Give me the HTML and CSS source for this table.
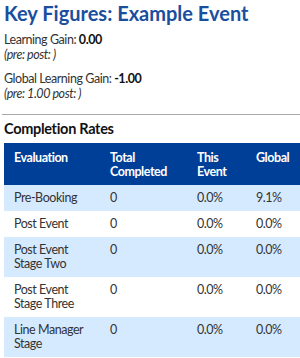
FILE: index.html
```html
<!DOCTYPE html>
<html>
<head>
<meta charset="utf-8">
<link rel="stylesheet" href="styles.css">
</head>
<body>
<div class="page">
  <h1 class="title">Key Figures: Example Event</h1>
  <div class="stat">
    <div>Learning Gain: <b>0.00</b></div>
    <div class="sub">(pre: post: )</div>
  </div>
  <div class="stat">
    <div>Global Learning Gain: <b>-1.00</b></div>
    <div class="sub">(pre: 1.00 post: )</div>
  </div>
  <hr class="rule">
  <h2 class="section">Completion Rates</h2>
  <table class="rates">
    <colgroup>
      <col class="c1"><col class="c2"><col class="c3"><col class="c4">
    </colgroup>
    <thead>
      <tr><th>Evaluation</th><th>Total Completed</th><th>This Event</th><th>Global</th></tr>
    </thead>
    <tbody>
      <tr class="alt"><td>Pre-Booking</td><td>0</td><td>0.0%</td><td>9.1%</td></tr>
      <tr><td>Post Event</td><td>0</td><td>0.0%</td><td>0.0%</td></tr>
      <tr class="alt"><td>Post Event Stage Two</td><td>0</td><td>0.0%</td><td>0.0%</td></tr>
      <tr><td>Post Event Stage Three</td><td>0</td><td>0.0%</td><td>0.0%</td></tr>
      <tr class="alt"><td>Line Manager Stage</td><td>0</td><td>0.0%</td><td>0.0%</td></tr>
    </tbody>
  </table>
</div>
</body>
</html>
```
FILE: styles.css
```css
html, body {
  margin: 0;
  padding: 0;
  overflow: hidden;
  background: #fff;
}
.page {
  font-family: Lato, "Open Sans", sans-serif;
  font-size: 12.5px;
  letter-spacing: -0.45px;
  color: #333;
  padding: 0 0 0 4px;
  width: 300px;
}
.title {
  margin: 0;
  padding-top: 1px;
  font-size: 20px;
  line-height: 24px;
  letter-spacing: 0;
  font-weight: bold;
  color: #1a4f9f;
}
.stat {
  margin-top: 7px;
  line-height: 15px;
}
.stat + .stat {
  margin-top: 9px;
}
.stat b {
  color: #111;
}
.sub {
  font-style: italic;
}
.rule {
  margin: 13px 0 0 -2px;
  border: 0;
  border-top: 1px solid #aaa;
  height: 0;
  width: 300px;
}
.section {
  margin: 5px 0 0 0;
  font-size: 14.5px;
  line-height: 18px;
  letter-spacing: -0.3px;
  font-weight: bold;
  color: #111;
}
.rates {
  margin-top: 5px;
  border-collapse: collapse;
  width: 300px;
  table-layout: fixed;
}
.c1 { width: 96px; }
.c2 { width: 87px; }
.c3 { width: 59px; }
.c4 { width: 58px; }
.rates th {
  background: #003f98;
  color: #fff;
  text-align: left;
  vertical-align: top;
  font-weight: bold;
  line-height: 14px;
  padding: 8px 10px 6px 10px;
}
.rates td {
  vertical-align: top;
  line-height: 14px;
  padding: 6px 10px 6px 10px;
}
.rates tr.alt td {
  background: #d5eaff;
}
```
